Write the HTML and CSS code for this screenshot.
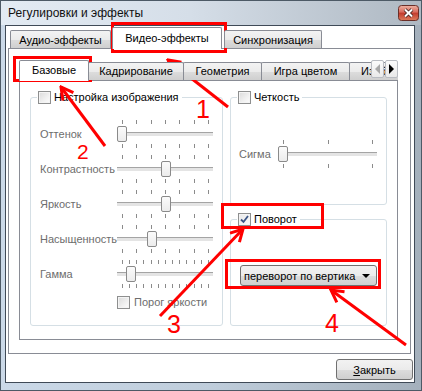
FILE: index.html
```html
<!DOCTYPE html>
<html lang="ru">
<head>
  <meta charset="UTF-8">
  <title>Регулировки и эффекты</title>
  <link rel="stylesheet" href="styles.css">
</head>
<body>
  <div class="window">
    <div class="titlebar">
      <span class="title">Регулировки и эффекты</span>
      <span class="close-btn">
        <svg width="21" height="16" viewBox="0 0 21 16">
          <defs>
            <linearGradient id="closeGrad" x1="0" y1="0" x2="0" y2="1">
              <stop offset="0" stop-color="#eeb3a4"/>
              <stop offset="0.45" stop-color="#d8695b"/>
              <stop offset="0.5" stop-color="#c23a2c"/>
              <stop offset="1" stop-color="#dc7d5c"/>
            </linearGradient>
          </defs>
          <rect x="0.5" y="0.5" width="20" height="15" rx="3" fill="url(#closeGrad)" stroke="#6a2f28"/>
          <path d="M7 4.5 L14 11.5 M14 4.5 L7 11.5" stroke="#40201b" stroke-width="3.6"/>
          <path d="M7 4.5 L14 11.5 M14 4.5 L7 11.5" stroke="#fff" stroke-width="2"/>
        </svg>
      </span>
    </div>

    <div class="client">
      <div class="tabs outer-tabs">
        <div class="tab">Аудио-эффекты</div>
        <div class="tab active">Видео-эффекты</div>
        <div class="tab">Синхронизация</div>
      </div>

      <div class="pane outer-pane">
        <div class="tabs inner-tabs">
          <div class="tab active">Базовые</div>
          <div class="tab">Кадрирование</div>
          <div class="tab">Геометрия</div>
          <div class="tab">Игра цветом</div>
          <div class="tab">Изображение</div>
          <div class="tab-scroll">
            <span class="scroll-btn disabled"><i class="arrow-left"></i></span>
            <span class="scroll-btn"><i class="arrow-right"></i></span>
          </div>
        </div>

        <div class="pane inner-pane">
          <fieldset class="group">
            <legend><span class="check"></span>Настройка изображения</legend>
            <div class="rows">
              <div class="slider-row">
                <span class="slider-label">Оттенок</span>
                <div class="slider">
                  <div class="ticks"><i></i><i></i><i></i><i></i><i></i><i></i><i></i></div>
                  <div class="groove"><span class="thumb" style="--v: 0"></span></div>
                  <div class="ticks"><i></i><i></i><i></i><i></i><i></i><i></i><i></i></div>
                </div>
              </div>
              <div class="slider-row">
                <span class="slider-label">Контрастность</span>
                <div class="slider">
                  <div class="ticks"><i></i><i></i><i></i><i></i><i></i><i></i><i></i></div>
                  <div class="groove"><span class="thumb" style="--v: 0.51"></span></div>
                  <div class="ticks"><i></i><i></i><i></i><i></i><i></i><i></i><i></i></div>
                </div>
              </div>
              <div class="slider-row">
                <span class="slider-label">Яркость</span>
                <div class="slider">
                  <div class="ticks"><i></i><i></i><i></i><i></i><i></i><i></i><i></i></div>
                  <div class="groove"><span class="thumb" style="--v: 0.51"></span></div>
                  <div class="ticks"><i></i><i></i><i></i><i></i><i></i><i></i><i></i></div>
                </div>
              </div>
              <div class="slider-row">
                <span class="slider-label">Насыщенность</span>
                <div class="slider">
                  <div class="ticks"><i></i><i></i><i></i><i></i><i></i><i></i><i></i></div>
                  <div class="groove"><span class="thumb" style="--v: 0.35"></span></div>
                  <div class="ticks"><i></i><i></i><i></i><i></i><i></i><i></i><i></i></div>
                </div>
              </div>
              <div class="slider-row">
                <span class="slider-label">Гамма</span>
                <div class="slider">
                  <div class="ticks"><i></i><i></i><i></i><i></i><i></i><i></i><i></i><i></i><i></i><i></i><i></i><i></i><i></i></div>
                  <div class="groove"><span class="thumb" style="--v: 0.105"></span></div>
                  <div class="ticks"><i></i><i></i><i></i><i></i><i></i><i></i><i></i><i></i><i></i><i></i><i></i><i></i><i></i></div>
                </div>
              </div>
            </div>
            <label class="check-row"><span class="check"></span>Порог яркости</label>
          </fieldset>

          <div class="right-col">
            <fieldset class="group sharpen">
              <legend><span class="check"></span>Четкость</legend>
              <div class="slider-row sigma-row">
                <span class="slider-label">Сигма</span>
                <div class="slider wide">
                  <div class="ticks"><i></i><i></i><i></i></div>
                  <div class="groove"><span class="thumb" style="--v: 0"></span></div>
                  <div class="ticks"><i></i><i></i><i></i></div>
                </div>
              </div>
            </fieldset>

            <fieldset class="group rotate">
              <legend>
                <span class="check checked">
                  <svg width="11" height="11" viewBox="0 0 11 11"><path d="M2 5.5 L4.5 8 L9 2" fill="none" stroke="#3b5586" stroke-width="1.8"/></svg>
                </span>Поворот
              </legend>
              <div class="combo">
                <span class="combo-text">переворот по вертика</span>
                <i class="combo-arrow"></i>
              </div>
            </fieldset>
          </div>
        </div>
      </div>

      <div class="buttons">
        <button class="btn" type="button"><u>З</u>акрыть</button>
      </div>
    </div>
  </div>

  <svg class="annotations" width="422" height="391" viewBox="0 0 422 391">
    <defs>
      <marker id="head" markerUnits="userSpaceOnUse" viewBox="0 0 16 16" refX="14" refY="8" markerWidth="16" markerHeight="16" orient="auto">
        <path d="M2 1.5 L14 8 L2 14.5" fill="none" stroke="#f00" stroke-width="3"/>
      </marker>
    </defs>
    <g fill="none" stroke="#f00" stroke-width="3">
      <rect x="112.5" y="23.5" width="113" height="28"/>
      <rect x="14.5" y="57.5" width="76" height="23"/>
      <rect x="222.5" y="204.5" width="100" height="23"/>
      <rect x="226.5" y="260.5" width="153" height="27"/>
      <line x1="228" y1="107" x2="168" y2="60" marker-end="url(#head)"/>
      <line x1="105" y1="146" x2="61" y2="87" marker-end="url(#head)"/>
      <line x1="160" y1="316" x2="243" y2="229" marker-end="url(#head)"/>
      <line x1="406" y1="345" x2="331" y2="290" marker-end="url(#head)"/>
    </g>
    <g class="marks" fill="#f00">
      <text x="196" y="118" font-size="25">1</text>
      <text x="77" y="159" font-size="21">2</text>
      <text x="167" y="333" font-size="25">3</text>
      <text x="325" y="332" font-size="25">4</text>
    </g>
  </svg>
</body>
</html>
```

FILE: styles.css
```css
* {
  box-sizing: border-box;
}
body {
  margin: 0;
  font-family: "Liberation Sans", Arial, sans-serif;
  font-size: 12px;
  color: #000;
  background: #fff;
  position: relative;
}
.window {
  width: 422px;
  height: 391px;
  border: 1px solid #4d5a66;
  background: linear-gradient(to right, #cbd9e8 0%, #bfcddb 50%, #a4b0bc 100%);
  display: flex;
  flex-direction: column;
}
.titlebar {
  height: 24px;
  display: flex;
  align-items: flex-start;
  background: linear-gradient(to right, #e3ebf3 0%, #d5dee8 45%, #aeb8c2 100%);
}
.title {
  line-height: 24px;
  padding-left: 7px;
  color: #111;
}
.close-btn {
  margin: 4px 2px 0 auto;
  height: 16px;
}
.close-btn svg {
  display: block;
}
.client {
  height: 358px;
  margin: 0 6px 0 4px;
  border: 1px solid #3f4a57;
  background: #fff;
  padding: 0 3px 0 2px;
  font-size: 11px;
  display: flex;
  flex-direction: column;
}

/* tabs */
.tabs {
  display: flex;
  align-items: flex-end;
  height: 23px;
  margin-bottom: -1px;
  position: relative;
  z-index: 1;
}
.outer-tabs {
  padding-left: 2px;
}
.tab {
  flex: none;
  height: 18px;
  line-height: 16px;
  margin-bottom: 1px;
  border: 1px solid #898c95;
  border-bottom: none;
  border-radius: 2px 2px 0 0;
  background: linear-gradient(#f3f3f3 0%, #ebebeb 50%, #dddddd 51%, #cfcfcf 100%);
  text-align: center;
  white-space: nowrap;
}
.tab + .tab {
  margin-left: -1px;
}
.tab.active {
  height: 22px;
  line-height: 19px;
  background: #fff;
  position: relative;
  z-index: 1;
}
.outer-tabs .tab {
  line-height: 18px;
}
.outer-tabs .tab.active {
  padding-top: 1px;
}
.outer-tabs .tab:nth-child(1) { width: 101px; }
.outer-tabs .tab:nth-child(2) { width: 110px; margin: 0 3px 0 1px; }
.outer-tabs .tab:nth-child(3) { width: 98px; }

.inner-tabs {
  overflow: hidden;
}
.inner-tabs .tab.active {
  height: 21px;
  margin: 0;
}
.inner-tabs .tab:nth-child(1) { width: 70px; }
.inner-tabs .tab:nth-child(2) { width: 96px; }
.inner-tabs .tab:nth-child(3) { width: 79px; }
.inner-tabs .tab:nth-child(4) { width: 89px; }
.inner-tabs .tab:nth-child(5) { width: 90px; text-align: left; padding-left: 11px; }

.tab-scroll {
  position: absolute;
  right: 0;
  top: 2px;
  display: flex;
  gap: 1px;
  z-index: 2;
}
.scroll-btn {
  width: 13px;
  height: 18px;
  border: 1px solid #b9bcc2;
  border-radius: 2px;
  background: linear-gradient(#fbfbfb, #e9e9e9);
  display: flex;
  align-items: center;
  justify-content: center;
}
.arrow-left,
.arrow-right {
  width: 0;
  height: 0;
  border-top: 5px solid transparent;
  border-bottom: 5px solid transparent;
}
.arrow-left {
  border-right: 5px solid #a8a8a8;
}
.arrow-right {
  border-left: 5px solid #000;
}

.pane {
  border: 1px solid #898c95;
  background: #fff;
}
.outer-pane {
  height: 306px;
  padding: 9px 12px 13px 10px;
  display: flex;
  flex-direction: column;
}
.inner-pane {
  height: 260px;
  padding: 9px 10px 13px 10px;
  display: grid;
  grid-template-columns: 193px 157px;
  column-gap: 7px;
}

/* group boxes */
.group {
  margin: 0;
  padding: 0;
  min-width: 0;
  border: 1px solid #d5dfe5;
  border-radius: 3px;
}
.group legend {
  margin-left: 6px;
  padding: 0 3px 0 1px;
  height: 14px;
  line-height: 14px;
  display: flex;
  align-items: center;
  gap: 3px;
}
.check {
  width: 13px;
  height: 13px;
  border: 1px solid #8e8f8f;
  background: linear-gradient(135deg, #dadada 0%, #f0f0f0 60%, #fdfdfd 100%);
  box-shadow: inset 0 0 0 1px #f4f4f4;
  display: inline-flex;
  align-items: center;
  justify-content: center;
  flex: none;
}
.check.checked {
  background: linear-gradient(135deg, #e8e8e8 0%, #fbfbfb 100%);
}
.check svg {
  display: block;
}
.rows {
  margin-top: 12px;
  padding-left: 9px;
}
.slider-row {
  display: flex;
  align-items: center;
  height: 35px;
}
.slider-label {
  width: 77px;
  flex: none;
  color: #6d6d6d;
  white-space: nowrap;
}
.slider {
  width: 96px;
  height: 30px;
  padding-top: 1px;
  display: flex;
  flex-direction: column;
}
.slider.wide {
  width: 99px;
}
.ticks {
  height: 4px;
  padding: 0 4px 0 5px;
  display: flex;
  justify-content: space-between;
}
.ticks i {
  width: 1px;
  height: 4px;
  background: #8b8b8b;
}
.groove {
  position: relative;
  height: 16px;
  margin: 2px 0;
}
.groove::before {
  content: "";
  position: absolute;
  left: 0;
  right: 0;
  top: 6px;
  height: 3px;
  border-top: 1px solid #a4a4a4;
  background: #e4e4e4;
}
.thumb {
  position: absolute;
  top: 0;
  left: calc(var(--v) * (100% - 10px));
  width: 10px;
  height: 16px;
  border: 1px solid #8a8a8a;
  border-radius: 2px;
  background: linear-gradient(#fbfbfb, #ececec);
}
.check-row {
  display: flex;
  align-items: center;
  gap: 4px;
  margin: 4px 0 0 86px;
  height: 14px;
  color: #6d6d6d;
}
.right-col {
  display: flex;
  flex-direction: column;
  gap: 7px;
}
.sharpen {
  height: 115px;
}
.rotate {
  flex: 1;
}
.sigma-row {
  height: 30px;
  margin-top: 35px;
  padding-left: 8px;
}
.sigma-row .slider-label {
  width: 39px;
}
.combo {
  width: 137px;
  height: 21px;
  margin: 39px 0 0 9px;
  padding: 0 6px 0 3px;
  border: 1px solid #707070;
  border-radius: 3px;
  background: linear-gradient(#f2f2f2 0%, #ebebeb 50%, #dddddd 51%, #cfcfcf 100%);
  display: flex;
  align-items: center;
}
.combo-text {
  flex: 1;
  min-width: 0;
  overflow: hidden;
  white-space: nowrap;
}
.combo-arrow {
  flex: none;
  width: 0;
  height: 0;
  border-left: 4px solid transparent;
  border-right: 4px solid transparent;
  border-top: 4px solid #000;
}

/* bottom buttons */
.buttons {
  display: flex;
  justify-content: flex-end;
  padding-top: 5px;
  margin-right: -2px;
}
.btn {
  width: 77px;
  height: 21px;
  padding: 0;
  font: inherit;
  color: #000;
  border: 1px solid #707070;
  border-radius: 3px;
  background: linear-gradient(#f2f2f2 0%, #ebebeb 50%, #dddddd 51%, #cfcfcf 100%);
}

/* red annotations drawn over the screenshot */
.annotations {
  position: absolute;
  left: 0;
  top: 0;
  pointer-events: none;
}
.marks {
  font-family: "Liberation Sans", Arial, sans-serif;
}
```
